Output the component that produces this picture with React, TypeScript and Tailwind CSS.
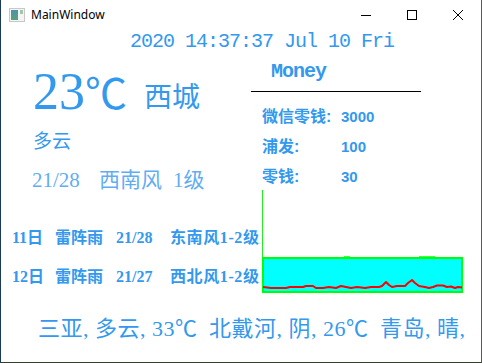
import React from 'react';

const SERIF = "font-['Liberation_Serif','Noto_Sans_CJK_SC',serif]";
const MONO = "font-['Liberation_Mono','Noto_Sans_CJK_SC',monospace]";
const SANS = "font-['Liberation_Sans','Noto_Sans_CJK_SC',sans-serif]";

// red trace inside the chart, coordinates relative to the chart widget
const trace = [
  [1, 97], [9, 98], [24, 98], [28, 97], [41, 97], [44, 96], [51, 96], [54, 98],
  [61, 98], [67, 97], [74, 98], [79, 96], [84, 97], [89, 98], [95, 97], [103, 98],
  [109, 97], [117, 97], [120, 96], [124, 92], [127, 95], [130, 97], [135, 96],
  [143, 96], [146, 93], [150, 90], [153, 93], [157, 96], [163, 97], [167, 98],
  [171, 97], [175, 95.5], [181, 95.5], [185, 97], [189, 96.5], [193, 98],
  [196, 97], [200, 97.5],
];

const money = [
  { label: '微信零钱:', value: '3000' },
  { label: '浦发:', value: '100' },
  { label: '零钱:', value: '30' },
];

const forecast = [
  { day: '11日', sky: '雷阵雨', temp: '21/28', wind: '东南风1-2级' },
  { day: '12日', sky: '雷阵雨', temp: '21/27', wind: '西北风1-2级' },
];

function TitleBar() {
  return (
    <div className="flex h-[30px] items-center bg-white">
      {/* app icon */}
      <div className="ml-[8px] flex h-[14px] w-[16px] border border-[#c8c8c8] bg-[#f4f4f4] p-[1px]">
        <div className="h-full w-[8px] bg-gradient-to-b from-[#4f8fb0] to-[#5aa07a]" />
        <div className="ml-[2px] h-[4px] w-[3px] bg-[#9fc7a8]" />
      </div>
      <span className="ml-[6px] font-['Noto_Sans',sans-serif] text-[12px] text-black">MainWindow</span>
      <div className="ml-auto flex h-full">
        <div className="flex w-[46px] items-center justify-center">
          <svg width="10" height="10" viewBox="0 0 10 10">
            <line x1="0" y1="5.5" x2="10" y2="5.5" stroke="#000" strokeWidth="1" />
          </svg>
        </div>
        <div className="flex w-[46px] items-center justify-center">
          <svg width="10" height="10" viewBox="0 0 10 10">
            <rect x="0.5" y="0.5" width="9" height="9" fill="none" stroke="#000" strokeWidth="1" />
          </svg>
        </div>
        <div className="flex w-[46px] items-center justify-center">
          <svg width="10" height="10" viewBox="0 0 10 10">
            <path d="M0 0 L10 10 M10 0 L0 10" stroke="#000" strokeWidth="1" />
          </svg>
        </div>
      </div>
    </div>
  );
}

function Chart() {
  return (
    <div className="absolute left-[261px] top-[190px] h-[106px] w-[204px] bg-white">
      <svg width="204" height="106" viewBox="0 0 204 106">
        <line x1="0.5" y1="0" x2="0.5" y2="68" stroke="#22ee22" strokeWidth="1" />
        <rect x="1" y="68" width="199" height="34" fill="#00ffff" stroke="#00ff00" strokeWidth="2" />
        <line x1="82" y1="67" x2="88" y2="67" stroke="#00ff00" strokeWidth="1.5" />
        <line x1="157" y1="67" x2="173" y2="67" stroke="#00ff00" strokeWidth="1.5" />
        <polyline
          points={trace.map(([x, y]) => `${x},${y}`).join(' ')}
          fill="none"
          stroke="#ff0000"
          strokeWidth="2"
          strokeLinejoin="round"
        />
      </svg>
    </div>
  );
}

export default function App() {
  return (
    <div className="relative h-[363px] w-[482px] overflow-hidden border-b border-l border-r border-b-[#34402c] border-l-[#1b3a5a] border-r-[#5a5a5a] bg-white">
      <TitleBar />

      {/* date */}
      <div className={`h-[24px] pl-[129px] ${MONO} text-[20px] leading-[24px] tracking-[-1px] text-[#3399ee]`}>
        2020 14:37:37 Jul 10 Fri
      </div>

      <div className="flex h-[140px]">
        {/* current weather */}
        <div className="w-[250px]">
          <div className="mt-[16px] flex h-[56px] items-center pl-[32px]">
            <div className={`w-[111px] ${SERIF} leading-[56px] text-[#3399ee]`}>
              <span className="text-[52px]">23</span>
              <span className="text-[42px]">℃</span>
            </div>
            <div className={`${SERIF} text-[28px] leading-[56px] text-[#3399ee]`}>西城</div>
          </div>
          <div className={`mt-[4px] h-[24px] pl-[32px] ${SERIF} text-[19px] leading-[24px] text-[#3399ee]`}>多云</div>
          <div className={`mt-[13px] flex h-[26px] whitespace-nowrap pl-[31px] ${SERIF} text-[21px] leading-[26px] text-[#62adf2]`}>
            <span className="w-[67px]">21/28</span>
            <span className="w-[74px]">西南风</span>
            <span>1级</span>
          </div>
        </div>

        {/* money panel */}
        <div className="flex-1">
          <div className={`mt-[6px] h-[24px] pl-[20px] ${MONO} text-[20px] font-bold leading-[24px] tracking-[-1px] text-[#3399ee]`}>
            Money
          </div>
          <div className="mt-[7px] h-px w-[170px] bg-black" />
          <div className="mt-[10px] pl-[11px]">
            {money.map((m) => (
              <div key={m.label} className={`flex h-[30px] items-center ${SANS} font-bold text-[#3399ee]`}>
                <span className="w-[79px] text-[16px] leading-[30px]">{m.label}</span>
                <span className="text-[15px] leading-[30px]">{m.value}</span>
              </div>
            ))}
          </div>
        </div>
      </div>

      {/* forecast */}
      <div className={`${SERIF} pl-[11px] text-[16px] font-bold text-[#3399ee]`}>
        {forecast.map((f, i) => (
          <div
            key={f.day}
            className={`flex h-[24px] whitespace-nowrap leading-[24px] ${i === 0 ? 'mt-[32px]' : 'mt-[15px]'}`}
          >
            <span className="w-[43px]">{f.day}</span>
            <span className="w-[61px]">{f.sky}</span>
            <span className="w-[54px]">{f.temp}</span>
            <span className="tracking-[0.6px]">{f.wind}</span>
          </div>
        ))}
      </div>

      {/* scrolling city line */}
      <div className={`mt-[26px] h-[28px] whitespace-nowrap pl-[37px] ${SERIF} text-[22px] leading-[28px] tracking-[0.5px] text-[#3399ee]`}>
        {'三亚, 多云, 33℃\u2002北戴河, 阴, 26℃\u2002青岛, 晴,'}
      </div>

      <Chart />
    </div>
  );
}
